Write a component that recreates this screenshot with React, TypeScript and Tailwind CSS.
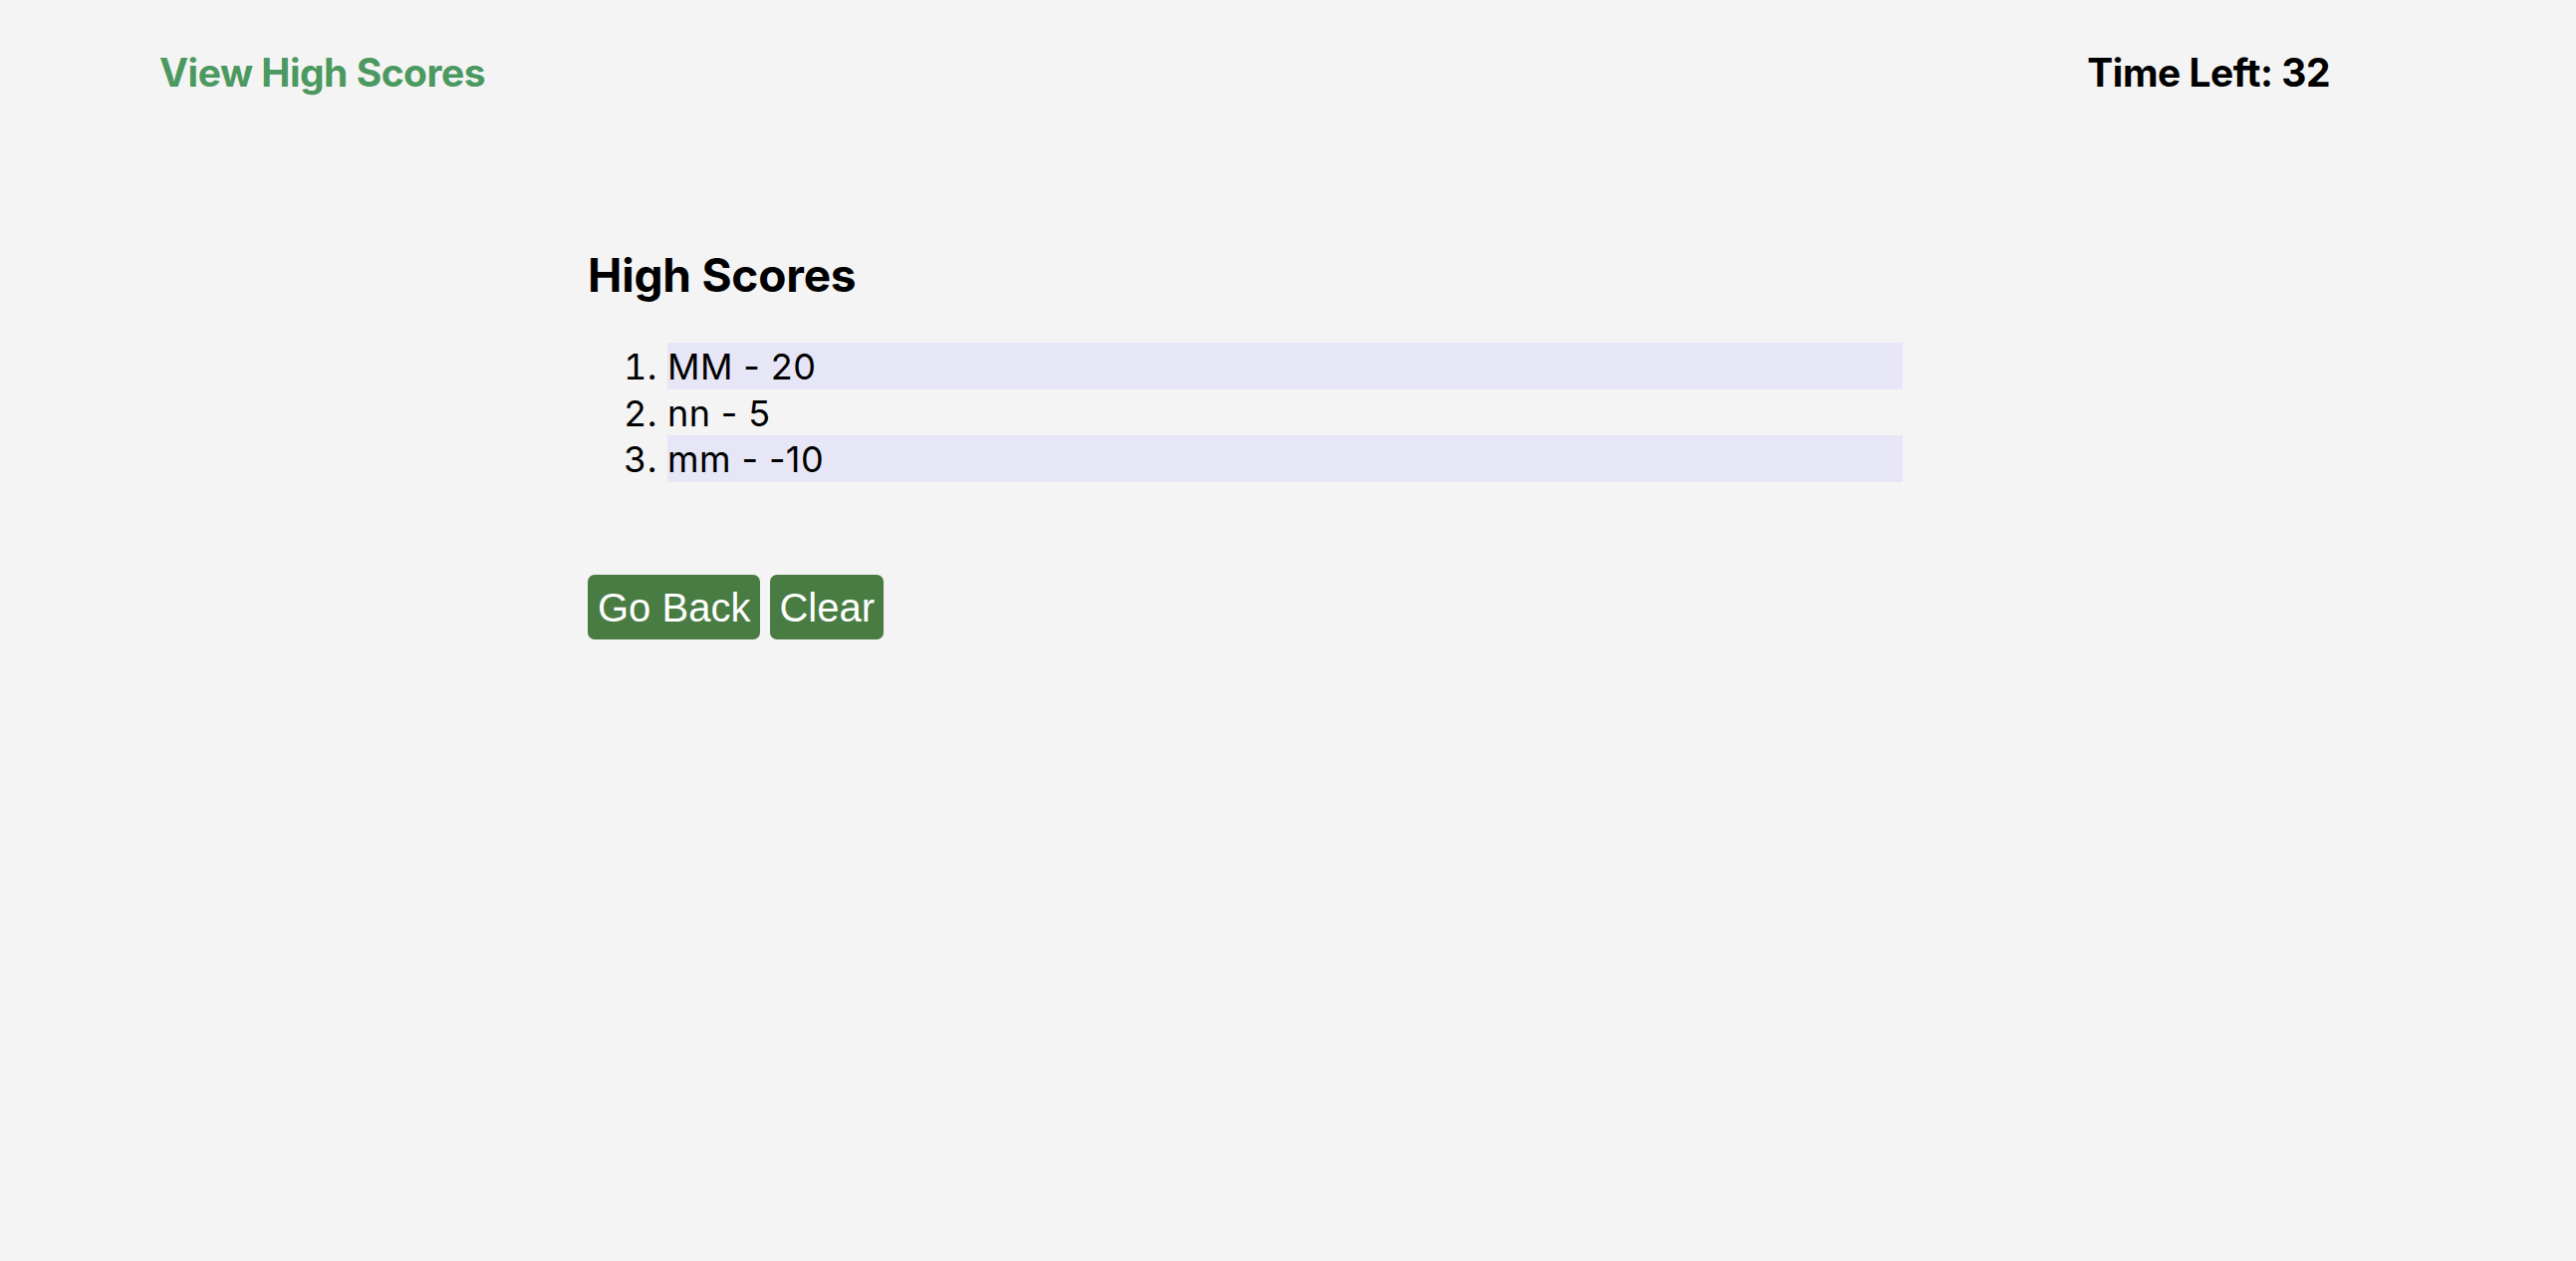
import React from "react";

export default function App() {
  const scores = [
    { name: "MM", score: 20 },
    { name: "nn", score: 5 },
    { name: "mm", score: -10 },
  ];
  return (
    <div className="min-h-screen w-full bg-[#f4f4f4] font-['Inter','Noto_Sans',sans-serif] text-black">
      <header className="flex justify-between pl-[160px] pr-[247px] pt-[49px]">
        <a className="text-[39px] leading-[47px] font-bold text-[#4c9960] tracking-[-0.5px] cursor-pointer">
          View High Scores
        </a>
        <div className="text-[39px] leading-[47px] font-bold tracking-[-0.5px]">Time Left: 32</div>
      </header>
      <main className="pl-[590px] pt-[153px]">
        <h1 className="text-[46px] leading-[54px] font-bold tracking-[-0.2px]">High Scores</h1>
        <ol className="list-decimal pl-[80px] mt-[41px] w-[1320px] text-[36px] tracking-[0.4px]">
          {scores.map((s, i) => (
            <li
              key={i}
              className={
                i % 2 === 0
                  ? "bg-[#e6e6f7] pt-[2px] leading-[44.7px]"
                  : "pt-[2px] leading-[44.7px]"
              }
            >
              {s.name} - {s.score}
            </li>
          ))}
        </ol>
        <div className="flex gap-[10px] mt-[93px] font-['Liberation_Sans',Arial,sans-serif]">
          <button className="h-[65px] px-[10px] rounded-[7px] bg-[#497c42] text-white text-[40px] leading-none">
            Go Back
          </button>
          <button className="h-[65px] px-[9px] rounded-[7px] bg-[#497c42] text-white text-[40px] leading-none">
            Clear
          </button>
        </div>
      </main>
    </div>
  );
}
